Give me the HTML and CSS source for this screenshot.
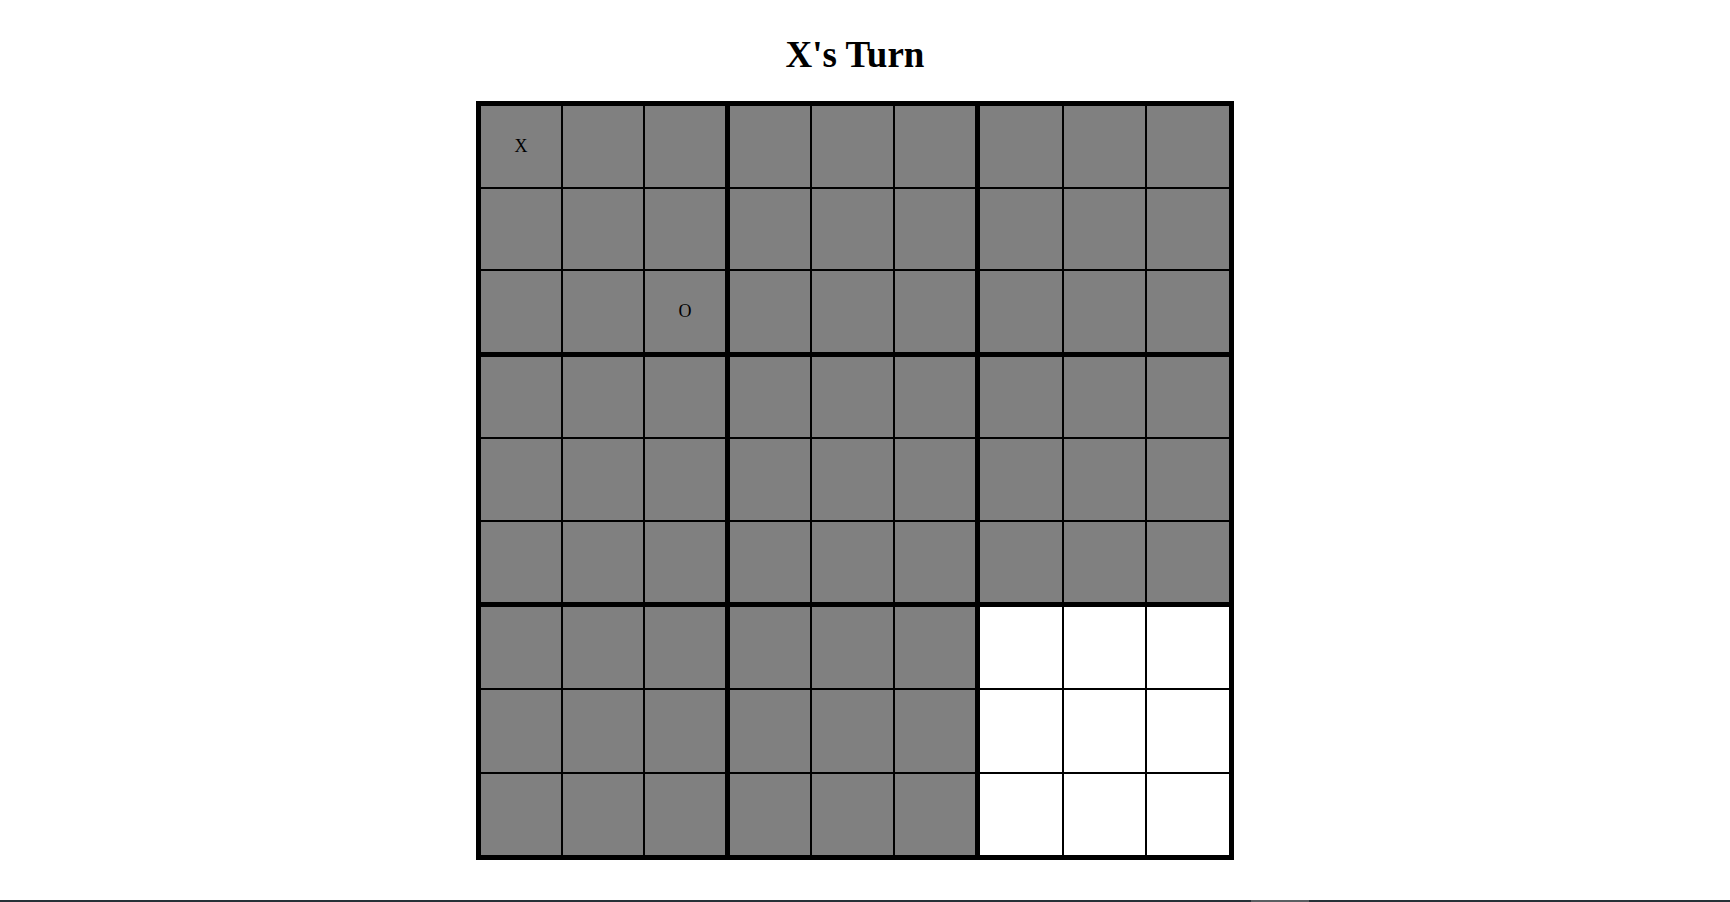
FILE: index.html
```html
<!DOCTYPE html>
<html lang="en">
<head>
    <meta charset="UTF-8">
    <meta name="viewport" content="width=device-width, initial-scale=1.0">
    <title>Ultimate Tic Tac Toe</title>
    <link rel="stylesheet" href="styles.css">
</head>
<body>

    <div class="page">
        <h1 id="status">X's Turn</h1>
        <div id="board" class="board"></div>
    </div>
    <div class="taskbar"><span class="taskbar-item"></span></div>

    <script>
        // estado inicial: um X e um O ja jogados, proximo tabuleiro ativo = 8
        var marks = { "0-0": "X", "0-8": "O" };
        var activeBoard = 8;

        function montarTabuleiro() {
            var board = document.getElementById("board");
            board.innerHTML = "";

            for (var b = 0; b < 9; b++) {
                var sub = document.createElement("div");
                sub.className = "subgrid";

                for (var c = 0; c < 9; c++) {
                    var cell = document.createElement("div");
                    cell.className = "cell";
                    if (b !== activeBoard) {
                        cell.classList.add("disabled");
                    }
                    cell.textContent = marks[b + "-" + c] || "";
                    sub.appendChild(cell);
                }
                board.appendChild(sub);
            }
        }

        window.onload = montarTabuleiro;
    </script>

</body>
</html>
```

FILE: styles.css
```css
body {
    margin: 0;
    background-color: #ffffff;
    font-family: "Liberation Serif", "Times New Roman", serif;
    color: #000000;
}

.page {
    width: 1710px;
    display: flex;
    flex-direction: column;
    align-items: center;
}

h1 {
    margin: 35px 0 26px;
    font-size: 37px;
    line-height: 40px;
    font-weight: bold;
}

.board {
    width: 758px;
    height: 759px;
    box-sizing: border-box;
    padding: 5px;
    background-color: #000000;
    display: grid;
    grid-template-columns: 244px 245px 249px;
    grid-template-rows: 246px 245px 248px;
    gap: 5px;
}

.subgrid {
    display: grid;
    grid-template-columns: repeat(3, 1fr);
    grid-template-rows: repeat(3, 1fr);
    gap: 2px;
}

.cell {
    background-color: #ffffff;
    display: flex;
    align-items: center;
    justify-content: center;
    font-size: 18px;
}

.cell.disabled {
    background-color: #808080;
}

.taskbar {
    position: fixed;
    left: 0;
    right: 0;
    bottom: 0;
    height: 2px;
    background-color: #263238;
}

.taskbar-item {
    display: block;
    margin-left: 1251px;
    width: 58px;
    height: 2px;
    background-color: #5a5f62;
}
```
